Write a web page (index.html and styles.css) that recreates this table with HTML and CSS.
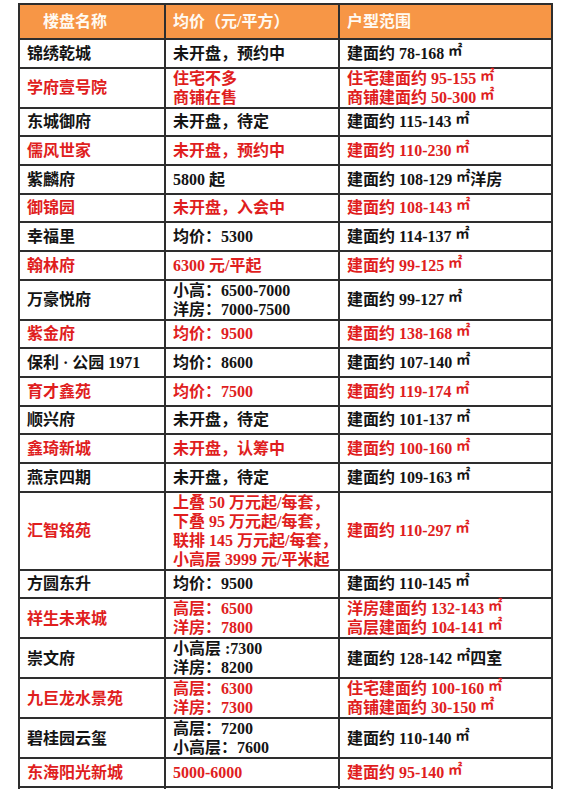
FILE: index.html
```html
<!DOCTYPE html>
<html lang="zh-CN">
<head>
<meta charset="utf-8">
<title>楼盘价格表</title>
<link rel="stylesheet" href="styles.css">
</head>
<body>
<table class="tbl">
<colgroup><col class="c1"><col class="c2"><col class="c3"></colgroup>
<thead>
<tr class="hd"><th class="h1">楼盘名称</th><th>均价（元/平方）</th><th>户型范围</th></tr>
</thead>
<tbody>
<tr><td>锦绣乾城</td><td>未开盘，预约中</td><td>建面约 <b>78-168</b> <span class="m2">㎡</span></td></tr>
<tr class="red"><td>学府壹号院</td><td>住宅不多<br>商铺在售</td><td>住宅建面约 <b>95-155</b> <span class="m2">㎡</span><br>商铺建面约 <b>50-300</b> <span class="m2">㎡</span></td></tr>
<tr><td>东城御府</td><td>未开盘，待定</td><td>建面约 <b>115-143</b> <span class="m2">㎡</span></td></tr>
<tr class="red"><td>儒风世家</td><td>未开盘，预约中</td><td>建面约 <b>110-230</b> <span class="m2">㎡</span></td></tr>
<tr><td>紫麟府</td><td><b>5800</b> 起</td><td>建面约 <b>108-129</b> <span class="m2">㎡</span>洋房</td></tr>
<tr class="red"><td>御锦园</td><td>未开盘，入会中</td><td>建面约 <b>108-143</b> <span class="m2">㎡</span></td></tr>
<tr><td>幸福里</td><td>均价：<b>5300</b></td><td>建面约 <b>114-137</b> <span class="m2">㎡</span></td></tr>
<tr class="red"><td>翰林府</td><td><b>6300</b> 元/平起</td><td>建面约 <b>99-125</b> <span class="m2">㎡</span></td></tr>
<tr><td>万豪悦府</td><td>小高：<b>6500-7000</b><br>洋房：<b>7000-7500</b></td><td>建面约 <b>99-127</b> <span class="m2">㎡</span></td></tr>
<tr class="red"><td>紫金府</td><td>均价：<b>9500</b></td><td>建面约 <b>138-168</b> <span class="m2">㎡</span></td></tr>
<tr><td>保利 · 公园 <b>1971</b></td><td>均价：<b>8600</b></td><td>建面约 <b>107-140</b> <span class="m2">㎡</span></td></tr>
<tr class="red"><td>育才鑫苑</td><td>均价：<b>7500</b></td><td>建面约 <b>119-174</b> <span class="m2">㎡</span></td></tr>
<tr><td>顺兴府</td><td>未开盘，待定</td><td>建面约 <b>101-137</b> <span class="m2">㎡</span></td></tr>
<tr class="red"><td>鑫琦新城</td><td>未开盘，认筹中</td><td>建面约 <b>100-160</b> <span class="m2">㎡</span></td></tr>
<tr><td>燕京四期</td><td>未开盘，待定</td><td>建面约 <b>109-163</b> <span class="m2">㎡</span></td></tr>
<tr class="red"><td>汇智铭苑</td><td>上叠 <b>50</b> 万元起/每套，<br>下叠 <b>95</b> 万元起/每套，<br>联排 <b>145</b> 万元起/每套，<br>小高层 <b>3999</b> 元/平米起</td><td>建面约 <b>110-297</b> <span class="m2">㎡</span></td></tr>
<tr><td>方圆东升</td><td>均价：<b>9500</b></td><td>建面约 <b>110-145</b> <span class="m2">㎡</span></td></tr>
<tr class="red"><td>祥生未来城</td><td>高层：<b>6500</b><br>洋房：<b>7800</b></td><td>洋房建面约 <b>132-143</b> <span class="m2">㎡</span><br>高层建面约 <b>104-141</b> <span class="m2">㎡</span></td></tr>
<tr><td>崇文府</td><td>小高层 <b>:7300</b><br>洋房：<b>8200</b></td><td>建面约 <b>128-142</b> <span class="m2">㎡</span>四室</td></tr>
<tr class="red"><td>九巨龙水景苑</td><td>高层：<b>6300</b><br>洋房：<b>7300</b></td><td>住宅建面约 <b>100-160</b> <span class="m2">㎡</span><br>商铺建面约 <b>30-150</b> <span class="m2">㎡</span></td></tr>
<tr><td>碧桂园云玺</td><td>高层：<b>7200</b><br>小高层：<b>7600</b></td><td>建面约 <b>110-140</b> <span class="m2">㎡</span></td></tr>
<tr class="red"><td>东海阳光新城</td><td><b>5000-6000</b></td><td>建面约 <b>95-140</b> <span class="m2">㎡</span></td></tr>
<tr class="blank"><td></td><td></td><td></td></tr>
</tbody>
</table>
</body>
</html>
```

FILE: styles.css
```css
html, body {
  margin: 0;
  padding: 0;
  background: #ffffff;
}

body {
  font-family: "Liberation Serif", "Noto Sans CJK SC", serif;
  color: #141414;
}

.tbl {
  border-collapse: collapse;
  table-layout: fixed;
  width: 533px;
  margin: 3px 0 0 18px;
}

.c1 { width: 146px; }
.c2 { width: 174px; }
.c3 { width: 213px; }

.tbl th,
.tbl td {
  border: 2px solid #2e2e2e;
  padding: 0 7px;
  text-align: left;
  vertical-align: middle;
  font-size: 16px;
  line-height: 19px;
  white-space: nowrap;
}

.tbl td {
  height: 26.67px;
  font-weight: 700;
}

.tbl td b {
  font-weight: 700;
}

.hd th {
  height: 33px;
  background: #f79646;
  color: #fffaf2;
  font-weight: 700;
}

.hd .h1 {
  padding-left: 23px;
}

.red td {
  color: #e01e1e;
}

.m2 {
  font-family: "Noto Sans CJK SC", sans-serif;
  font-size: 14px;
  font-weight: 700;
  line-height: 0;
  vertical-align: 4px;
}

.blank td {
  height: 26px;
}
```
